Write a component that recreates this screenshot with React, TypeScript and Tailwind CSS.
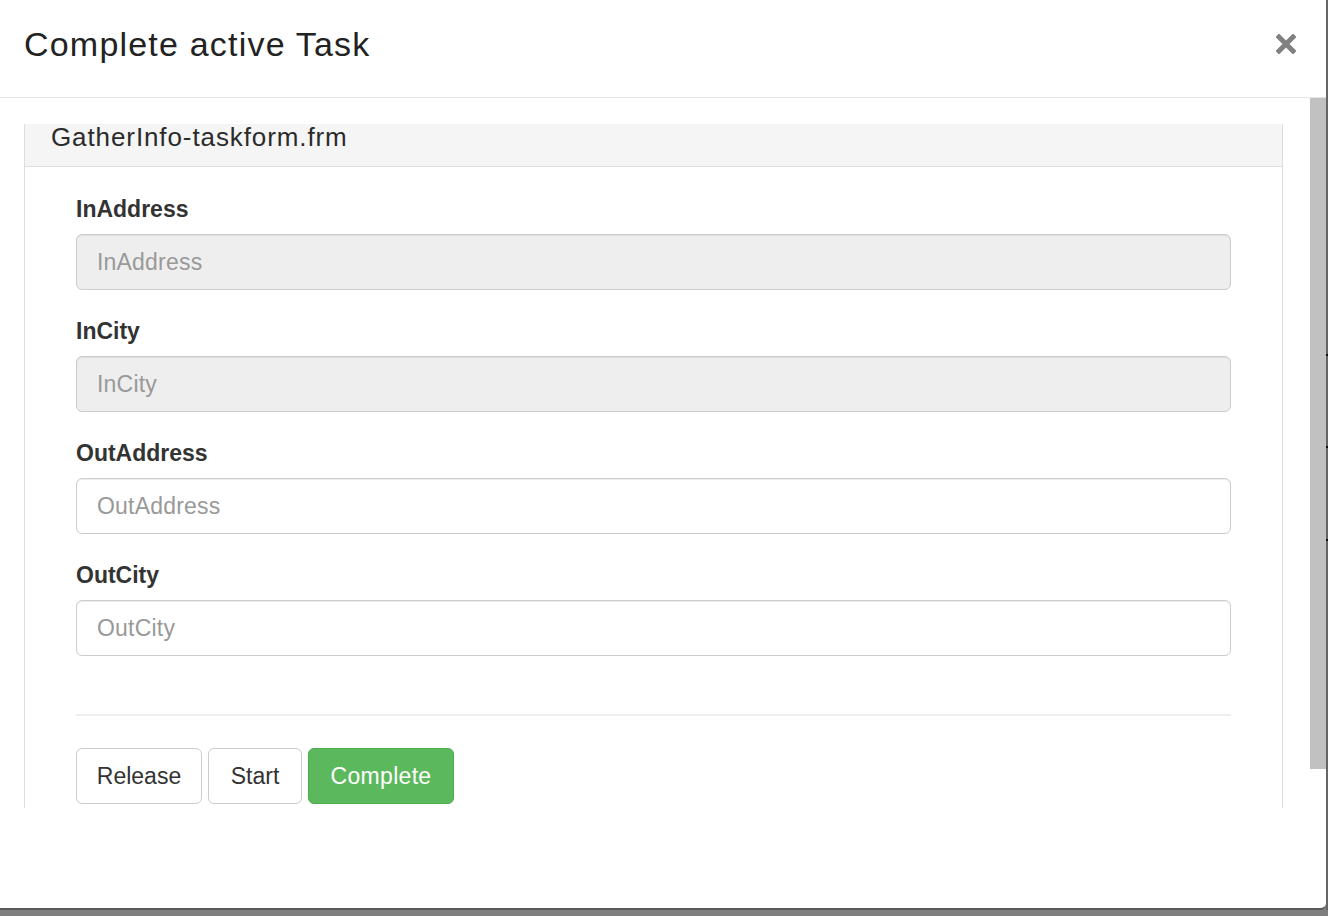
import React from "react";

const fields = [
  { label: "InAddress", disabled: true },
  { label: "InCity", disabled: true },
  { label: "OutAddress", disabled: false },
  { label: "OutCity", disabled: false },
];

const Field = ({ label, disabled }: { label: string; disabled: boolean }) => (
  <div className="mb-[26px]">
    <label className="block font-bold text-[23px] leading-[30px] text-[#333] mb-[10px]">{label}</label>
    <input
      disabled={disabled}
      placeholder={label}
      className={
        "block w-full h-[56px] px-[20px] text-[23px] tracking-[0.2px] rounded-[6px] border border-[#ccc] text-[#555] placeholder:text-[#999] outline-none shadow-[inset_0_1px_1px_rgba(0,0,0,0.075)] " +
        (disabled ? "bg-[#eee]" : "bg-white")
      }
    />
  </div>
);

export default function App() {
  return (
    <div
      className="w-[1328px] h-[916px] bg-[#7f7f7f] flex flex-col overflow-hidden"
      style={{ fontFamily: '"Liberation Sans", Arial, sans-serif' }}
    >
      <div className="flex h-[910px]">
        {/* modal */}
        <div className="w-[1326px] bg-white rounded-br-[6px] border-b-2 border-[#5a5a5a] flex flex-col">
          {/* header */}
          <div className="h-[98px] border-b border-[#e5e5e5] flex items-center justify-between pl-[24px] pr-[30px] shrink-0">
            <h4 className="text-[34px] tracking-[1.2px] text-[#222] leading-none -mt-[9px]">Complete active Task</h4>
            <svg width="20" height="20" viewBox="0 0 20 20" className="-mt-[10px]">
              <path d="M3 3 L17 17 M17 3 L3 17" stroke="#808080" strokeWidth="5" strokeLinecap="square" />
            </svg>
          </div>

          {/* body */}
          <div className="flex h-[710px] shrink-0">
            <div className="flex-1 pt-[26px] pl-[24px] pr-[27px] overflow-hidden">
              <div className="border-x border-[#ddd] h-full">
                <div className="h-[43px] bg-[#f5f5f5] border-b border-[#ddd] pl-[26px] flex items-center">
                  <span className="text-[26px] tracking-[0.9px] text-[#2b2b2b] -mt-[16px]">GatherInfo-taskform.frm</span>
                </div>
                <div className="pt-[27px] px-[51px] flex flex-col">
                  {fields.map((f) => (
                    <Field key={f.label} label={f.label} disabled={f.disabled} />
                  ))}
                  <div className="h-[2px] bg-[#eee] mt-[32px]" />
                  <div className="flex gap-[6px] mt-[32px]">
                    <button className="w-[126px] h-[56px] border border-[#ccc] rounded-[6px] bg-white text-[23px] text-[#333]">
                      Release
                    </button>
                    <button className="w-[94px] h-[56px] border border-[#ccc] rounded-[6px] bg-white text-[23px] text-[#333]">
                      Start
                    </button>
                    <button className="w-[146px] h-[56px] border border-[#4cae4c] rounded-[6px] bg-[#5cb85c] text-[23px] tracking-[0.3px] text-white">
                      Complete
                    </button>
                  </div>
                </div>
              </div>
            </div>
            {/* scrollbar */}
            <div className="w-[16px] flex flex-col">
              <div className="h-[671px] bg-[#c1c1c1]" />
            </div>
          </div>
        </div>

        {/* right edge strip */}
        <div className="w-[2px] bg-[#666] flex flex-col">
          <div className="h-[354px]" />
          <div className="h-[2px] bg-[#111]" />
          <div className="h-[90px]" />
          <div className="h-[2px] bg-[#111]" />
          <div className="h-[91px]" />
          <div className="h-[2px] bg-[#111]" />
        </div>
      </div>
    </div>
  );
}
